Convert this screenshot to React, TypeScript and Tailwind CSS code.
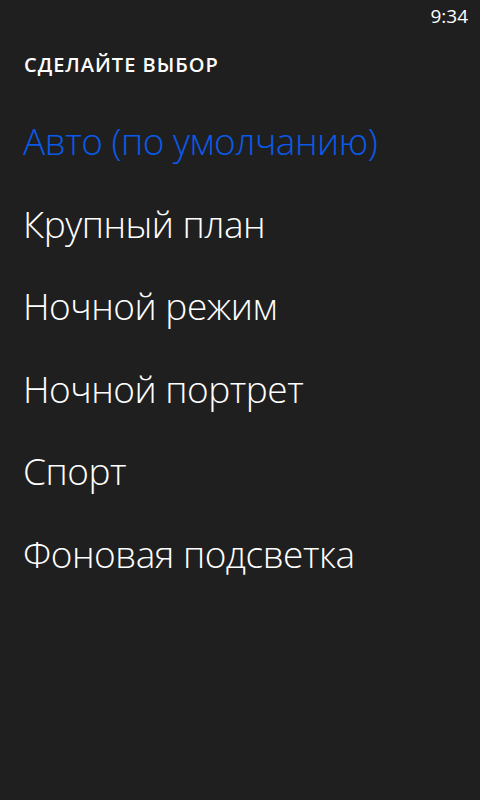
const items = [
  "Авто (по умолчанию)",
  "Крупный план",
  "Ночной режим",
  "Ночной портрет",
  "Спорт",
  "Фоновая подсветка",
];

export default function App() {
  return (
    <div className="h-[800px] w-[480px] overflow-hidden bg-[#1f1f1f] text-white" style={{ fontFamily: '"Open Sans", "Noto Sans", sans-serif' }}>
      {/* status bar */}
      <div className="flex h-[32px] justify-end pr-[12px] pt-[3px] text-[19px] leading-[26px]">9:34</div>

      <div className="pl-[24px] pt-[20px] text-[20px] font-semibold leading-[26px] tracking-[1px]">СДЕЛАЙТЕ ВЫБОР</div>

      <ul className="mt-[22px] pl-[23px]">
        {items.map((t, i) => (
          <li
            key={t}
            className={`h-[82.6px] text-[37px] font-[350] leading-[82px] tracking-[-0.5px] ${i === 0 ? "text-[#0a5ae8]" : "text-white"}`}
          >
            {t}
          </li>
        ))}
      </ul>
    </div>
  );
}
